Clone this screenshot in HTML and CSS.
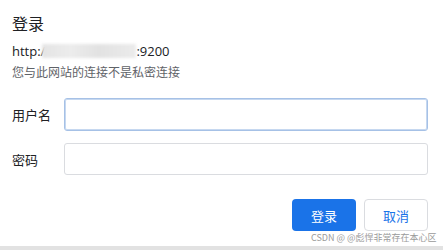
FILE: index.html
```html
<!DOCTYPE html>
<html lang="zh-CN">
<head>
<meta charset="utf-8">
<title>登录</title>
<link rel="stylesheet" href="styles.css">
</head>
<body>
<div class="dialog">
  <div class="title">登录</div>
  <div class="url"><span>http:/</span><span class="blur"></span><span>:9200</span></div>
  <div class="warn">您与此网站的连接不是私密连接</div>
  <div class="row first">
    <label class="label">用户名</label>
    <div class="input focus"></div>
  </div>
  <div class="row second">
    <label class="label">密码</label>
    <div class="input"></div>
  </div>
  <div class="actions">
    <button class="btn primary">登录</button>
    <button class="btn secondary">取消</button>
  </div>
  <div class="watermark">CSDN @ @彪悍非常存在本心区</div>
</div>
</body>
</html>
```
FILE: styles.css
```css
html, body {
  margin: 0;
  padding: 0;
}
body {
  width: 443px;
  height: 250px;
  background: #e2e2e2;
  font-family: "Open Sans", "Noto Sans CJK SC", sans-serif;
  color: #202124;
  overflow: hidden;
}
.dialog {
  position: relative;
  box-sizing: border-box;
  height: 246px;
  background: #fff;
  padding: 12px 15px 0 12px;
  display: flex;
  flex-direction: column;
}
.title {
  font-size: 16px;
  line-height: 24px;
  height: 24px;
}
.url {
  margin-top: 6px;
  font-size: 13px;
  line-height: 18px;
  height: 18px;
  display: flex;
  align-items: center;
}
.blur {
  display: inline-block;
  width: 94px;
  height: 14px;
  background: linear-gradient(90deg, #e4e4e4 0%, #ececec 30%, #e2e2e2 60%, #ebebeb 100%);
  filter: blur(1.5px);
  margin: 0 0 0 -3px;
}
.warn {
  margin-top: 4px;
  font-size: 12px;
  line-height: 18px;
  color: #5f6368;
}
.row {
  display: flex;
  align-items: center;
}
.row.first { margin-top: 16px; }
.row.second { margin-top: 12px; }
.label {
  width: 52px;
  flex: none;
  font-size: 13px;
  color: #202124;
}
.input {
  box-sizing: border-box;
  flex: 1;
  height: 32px;
  border: 1px solid #dadce0;
  border-radius: 3px;
  background: #fff;
}
.input.focus {
  height: 33px;
  border: 1px solid #a6c1e6;
  box-shadow: inset 0 0 0 1px #c6d8f0;
}
.actions {
  margin-top: 24px;
  display: flex;
  justify-content: flex-end;
  gap: 8px;
}
.btn {
  box-sizing: border-box;
  width: 64px;
  height: 32px;
  border-radius: 4px;
  font-family: "Noto Sans CJK SC", sans-serif;
  font-size: 13px;
  padding: 0;
  cursor: pointer;
}
.primary {
  background: #1a73e8;
  color: #fff;
  border: none;
}
.secondary {
  background: #fff;
  color: #1a73e8;
  border: 1px solid #dadce0;
}
.watermark {
  position: absolute;
  left: 311px;
  top: 232px;
  font-family: "Noto Sans CJK SC", sans-serif;
  font-size: 9px;
  line-height: 12px;
  color: #9a9a9a;
  white-space: nowrap;
}
```
